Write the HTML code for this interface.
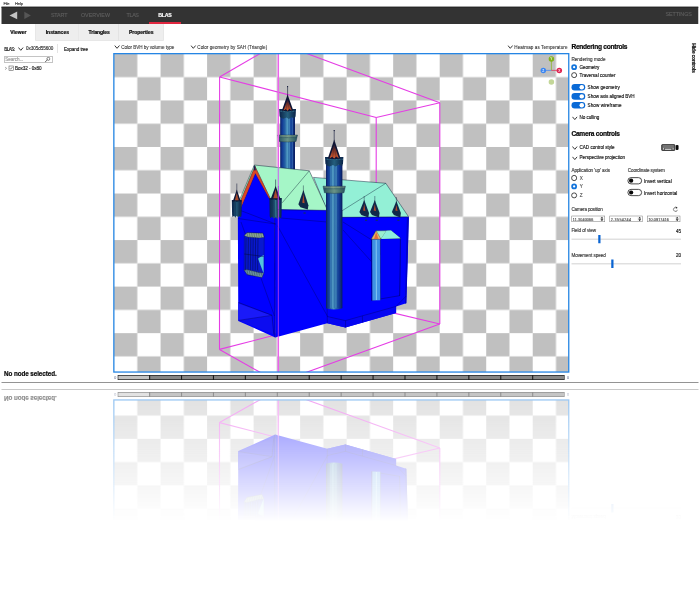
<!DOCTYPE html>
<html><head><meta charset="utf-8"><title>BLAS Viewer</title>
<style>
html,body{margin:0;padding:0;background:#fff;}
body{width:700px;height:600px;overflow:hidden;position:relative;font-family:"Liberation Sans",sans-serif;}
#outer{position:absolute;left:0;top:0;width:2800px;height:1532px;transform:scale(0.25);transform-origin:0 0;}
#app{position:absolute;left:0;top:0;width:700px;height:383px;background:#fff;overflow:hidden;zoom:4;
-webkit-box-reflect:below 6px linear-gradient(to bottom, rgba(255,255,255,0) 65.5%, rgba(255,255,255,0.5) 100%);}
.t{position:absolute;white-space:nowrap;line-height:1;display:block;-webkit-text-stroke:0.14px currentColor;}
.b{position:absolute;display:block;}
</style></head><body>
<div id="outer"><div id="app">
<span class="t" style="left:3.60px;top:1.34px;font-size:4.0px;letter-spacing:-0.186px;color:#333;">File</span>
<span class="t" style="left:15.00px;top:1.34px;font-size:4.0px;letter-spacing:-0.082px;color:#333;">Help</span>
<div class="b" style="left:1.40px;top:6.75px;width:696.90px;height:17.25px;background:#333;border-top:1px solid #262626;box-sizing:border-box;"></div>
<svg class="b" style="left:0;top:0" width="700" height="383" viewBox="0 0 700 383"><polygon points="9.5,15.4 17.2,11.5 17.2,19.3" fill="#c4c4c4"/><polygon points="30.9,15.4 24.3,11.7 24.3,19.1" fill="#565656"/></svg>
<span class="t" style="left:50.90px;top:12.18px;font-size:5.35px;letter-spacing:-0.109px;color:#5e5e5e;">START</span>
<span class="t" style="left:80.90px;top:12.18px;font-size:5.35px;letter-spacing:0.045px;color:#5e5e5e;">OVERVIEW</span>
<span class="t" style="left:126.60px;top:12.18px;font-size:5.35px;letter-spacing:-0.345px;color:#5e5e5e;">TLAS</span>
<span class="t" style="left:158.30px;top:12.10px;font-size:5.3px;letter-spacing:-0.332px;color:#fff;font-weight:bold;">BLAS</span>
<span class="t" style="left:665.40px;top:12.08px;font-size:5.35px;letter-spacing:-0.044px;color:#5e5e5e;">SETTINGS</span>
<div class="b" style="left:148.90px;top:21.90px;width:32.20px;height:2.00px;background:#e0263f;"></div>
<div class="b" style="left:35.40px;top:23.90px;width:43.80px;height:16.50px;background:#eee;border:0.6px solid #d8d8d8;box-sizing:border-box;border-top:none;"></div>
<div class="b" style="left:79.20px;top:23.90px;width:39.70px;height:16.50px;background:#eee;border:0.6px solid #d8d8d8;box-sizing:border-box;border-top:none;border-left:none;"></div>
<div class="b" style="left:118.90px;top:23.90px;width:44.60px;height:16.50px;background:#eee;border:0.6px solid #d8d8d8;box-sizing:border-box;border-top:none;border-left:none;"></div>
<span class="t" style="left:10.30px;top:29.95px;font-size:5.0px;letter-spacing:0.012px;color:#0a0a0a;font-weight:bold;-webkit-text-stroke:0.2px #0a0a0a;">Viewer</span>
<span class="t" style="left:45.70px;top:29.95px;font-size:5.0px;letter-spacing:0.026px;color:#0a0a0a;font-weight:bold;-webkit-text-stroke:0.2px #0a0a0a;">Instances</span>
<span class="t" style="left:88.60px;top:29.95px;font-size:5.0px;letter-spacing:-0.095px;color:#0a0a0a;font-weight:bold;-webkit-text-stroke:0.2px #0a0a0a;">Triangles</span>
<span class="t" style="left:128.90px;top:29.95px;font-size:5.0px;letter-spacing:-0.023px;color:#0a0a0a;font-weight:bold;-webkit-text-stroke:0.2px #0a0a0a;">Properties</span>
<span class="t" style="left:4.30px;top:46.65px;font-size:4.6px;letter-spacing:-0.588px;color:#111;">BLAS:</span>
<svg class="b" style="left:17.90px;top:46.90px" width="5.8" height="4" viewBox="0 0 5.8 4"><polyline points="0.4,0.5 2.8,3.3 5.2,0.5" fill="none" stroke="#151515" stroke-width="0.85"/></svg>
<span class="t" style="left:26.00px;top:46.35px;font-size:4.6px;letter-spacing:-0.044px;color:#333;">0x305d55600</span>
<div class="b" style="left:57.40px;top:43.90px;width:0.50px;height:9.20px;background:#c8c8c8;"></div>
<span class="t" style="left:63.90px;top:46.65px;font-size:4.6px;letter-spacing:-0.055px;color:#111;">Expand tree</span>
<div class="b" style="left:3.90px;top:56.40px;width:49.00px;height:6.30px;border:0.6px solid #8a8a8a;box-sizing:border-box;background:#fff;"></div>
<span class="t" style="left:5.30px;top:57.45px;font-size:4.6px;letter-spacing:-0.079px;color:#9a9a9a;">Search...</span>
<svg class="b" style="left:44.5px;top:56.8px" width="6" height="6" viewBox="0 0 6 6"><circle cx="3.9" cy="2.1" r="1.5" fill="none" stroke="#333" stroke-width="0.6"/><line x1="2.8" y1="3.2" x2="0.6" y2="5.2" stroke="#333" stroke-width="0.75"/></svg>
<svg class="b" style="left:4.6px;top:66.5px" width="3" height="4" viewBox="0 0 3 4"><polyline points="0.6,0.5 2.1,1.8 0.6,3.1" fill="none" stroke="#555" stroke-width="0.55"/></svg>
<div class="b" style="left:8.80px;top:65.70px;width:4.80px;height:4.80px;border:0.6px solid #444;box-sizing:border-box;background:#fff;"></div>
<svg class="b" style="left:8.8px;top:65.7px" width="4.8" height="4.8" viewBox="0 0 4.8 4.8"><polyline points="1.1,2.5 2.0,3.5 3.8,1.2" fill="none" stroke="#333" stroke-width="0.55"/></svg>
<span class="t" style="left:15.00px;top:66.05px;font-size:4.6px;letter-spacing:-0.059px;color:#111;">Box32 - 0x80</span>
<span class="t" style="left:4.00px;top:370.31px;font-size:6.3px;letter-spacing:-0.077px;color:#0a0a0a;font-weight:bold;-webkit-text-stroke:0.2px #0a0a0a;">No node selected.</span>
<div class="b" style="left:1.40px;top:381.95px;width:697.20px;height:0.95px;background:#949494;"></div>
<svg class="b" style="left:114.20px;top:45.10px" width="5.8" height="4" viewBox="0 0 5.8 4"><polyline points="0.4,0.5 2.8,3.3 5.2,0.5" fill="none" stroke="#151515" stroke-width="0.85"/></svg>
<span class="t" style="left:121.20px;top:44.75px;font-size:4.6px;letter-spacing:-0.039px;color:#333;-webkit-text-stroke:0.08px currentColor;">Color BVH by volume type</span>
<svg class="b" style="left:190.60px;top:45.10px" width="5.8" height="4" viewBox="0 0 5.8 4"><polyline points="0.4,0.5 2.8,3.3 5.2,0.5" fill="none" stroke="#151515" stroke-width="0.85"/></svg>
<span class="t" style="left:197.30px;top:44.75px;font-size:4.6px;letter-spacing:0.028px;color:#333;-webkit-text-stroke:0.08px currentColor;">Color geometry by SAH (Triangle)</span>
<svg class="b" style="left:507.50px;top:45.10px" width="5.8" height="4" viewBox="0 0 5.8 4"><polyline points="0.4,0.5 2.8,3.3 5.2,0.5" fill="none" stroke="#151515" stroke-width="0.85"/></svg>
<span class="t" style="left:514.30px;top:44.75px;font-size:4.6px;letter-spacing:0.067px;color:#333;-webkit-text-stroke:0.08px currentColor;">Heatmap as Temperature</span>
<svg class="b" style="left:0;top:0" width="700" height="383" viewBox="0 0 700 383">
<defs>
<pattern id="chk" x="114.05" y="53.9" width="46.52" height="46.54" patternUnits="userSpaceOnUse">
<rect x="0" y="0" width="46.52" height="46.54" fill="#fff"/>
<rect x="0" y="0" width="23.26" height="23.27" fill="#c0c0c0"/>
<rect x="23.26" y="23.27" width="23.26" height="23.27" fill="#c0c0c0"/>
</pattern>
<clipPath id="vpc"><rect x="113.9" y="53.7" width="454.9" height="318.3"/></clipPath>
<linearGradient id="shaft" x1="0" x2="1" y1="0" y2="0">
<stop offset="0" stop-color="#0a1e5c"/><stop offset="0.12" stop-color="#123a94"/>
<stop offset="0.3" stop-color="#2866a6"/><stop offset="0.45" stop-color="#4e98be"/>
<stop offset="0.6" stop-color="#2c6ca8"/><stop offset="0.8" stop-color="#143c98"/>
<stop offset="1" stop-color="#081a5a"/></linearGradient>
<linearGradient id="crown" x1="0" x2="1" y1="0" y2="0">
<stop offset="0" stop-color="#0a2248"/><stop offset="0.5" stop-color="#245e7c"/><stop offset="1" stop-color="#0a2248"/></linearGradient>
<linearGradient id="ring" x1="0" x2="1" y1="0" y2="0">
<stop offset="0" stop-color="#24505e"/><stop offset="0.5" stop-color="#6a9486"/><stop offset="1" stop-color="#24505e"/></linearGradient>
<linearGradient id="cone" x1="0" x2="1" y1="0" y2="0">
<stop offset="0" stop-color="#0a1030"/><stop offset="0.36" stop-color="#1c1c3c"/><stop offset="0.5" stop-color="#d8582a"/>
<stop offset="0.64" stop-color="#1c1c3c"/><stop offset="1" stop-color="#0a1030"/></linearGradient>
<linearGradient id="flame" x1="0" x2="0" y1="0" y2="1"><stop offset="0" stop-color="#1a1a3a"/><stop offset="0.4" stop-color="#7a3428"/><stop offset="1" stop-color="#d85c2e"/></linearGradient>
<linearGradient id="win" x1="0" x2="1" y1="0" y2="0">
<stop offset="0" stop-color="#0a1a70"/><stop offset="0.5" stop-color="#1a3aa0"/><stop offset="1" stop-color="#0a1a70"/></linearGradient>
</defs>
<rect x="113.85" y="53.65" width="454.9" height="318.4" fill="url(#chk)"/>
<g clip-path="url(#vpc)">
<line x1="219.6" y1="77.0" x2="278.3" y2="43.0" stroke="#e53de5" stroke-width="1.1" stroke-opacity="1"/>
<line x1="278.3" y1="43.0" x2="439.8" y2="102.7" stroke="#e53de5" stroke-width="1.1" stroke-opacity="1"/>
<line x1="439.8" y1="102.7" x2="376.2" y2="117.5" stroke="#e53de5" stroke-width="1.1" stroke-opacity="1"/>
<line x1="376.2" y1="117.5" x2="219.6" y2="77.0" stroke="#e53de5" stroke-width="1.1" stroke-opacity="1"/>
<line x1="219.6" y1="77.0" x2="219.5" y2="349.4" stroke="#e53de5" stroke-width="1.1" stroke-opacity="1"/>
<line x1="439.8" y1="102.7" x2="439.8" y2="324.0" stroke="#e53de5" stroke-width="1.1" stroke-opacity="1"/>
<line x1="376.2" y1="117.5" x2="376.2" y2="308.9" stroke="#e53de5" stroke-width="1.1" stroke-opacity="1"/>
<line x1="219.5" y1="349.4" x2="376.2" y2="308.9" stroke="#e53de5" stroke-width="1.1" stroke-opacity="1"/>
<line x1="376.2" y1="308.9" x2="439.8" y2="324.0" stroke="#e53de5" stroke-width="1.1" stroke-opacity="1"/>
<line x1="219.5" y1="349.4" x2="278.3" y2="382.5" stroke="#e53de5" stroke-width="1.1" stroke-opacity="1"/>
<line x1="278.3" y1="382.5" x2="439.8" y2="324.0" stroke="#e53de5" stroke-width="1.1" stroke-opacity="1"/>
<path d="M280.20000000000005,116.7 L280.20000000000005,175.0 L295.0,175.0 L295.0,116.7 Z" fill="url(#shaft)"/>
<line x1="282.80" y1="117.2" x2="283.02" y2="173.5" stroke="#0a2a90" stroke-width="0.5" stroke-opacity="0.6"/>
<line x1="284.30" y1="117.2" x2="284.32" y2="173.5" stroke="#103c9c" stroke-width="0.5" stroke-opacity="0.6"/>
<line x1="285.88" y1="117.2" x2="285.75" y2="173.5" stroke="#103c9c" stroke-width="0.5" stroke-opacity="0.6"/>
<line x1="287.42" y1="117.2" x2="287.52" y2="173.5" stroke="#6ab8e0" stroke-width="0.5" stroke-opacity="0.6"/>
<line x1="289.38" y1="117.2" x2="289.49" y2="173.5" stroke="#7cc4e8" stroke-width="0.5" stroke-opacity="0.6"/>
<line x1="290.58" y1="117.2" x2="290.54" y2="173.5" stroke="#103c9c" stroke-width="0.5" stroke-opacity="0.6"/>
<line x1="292.44" y1="117.2" x2="292.46" y2="173.5" stroke="#6ab8e0" stroke-width="0.5" stroke-opacity="0.6"/>
<path d="M277.70000000000005,135.0 L297.5,135.0 L296.1,141.4 Q287.6,142.6 279.1,141.4 Z" fill="url(#ring)" stroke="#14304a" stroke-width="0.4"/>
<line x1="278.50000000000006" y1="135.9" x2="296.7" y2="135.9" stroke="#d6d69a" stroke-width="0.7" stroke-dasharray="0.6 0.6"/>
<line x1="279.1" y1="137.6" x2="296.1" y2="137.6" stroke="#2a4a5a" stroke-width="0.9" stroke-dasharray="0.5 0.7"/>
<path d="M279.20000000000005,109.0 L296.0,109.0 L295.6,116.2 L294.6,118.4 L291.8,117.2 L288.8,119.0 L286.40000000000003,117.4 L283.40000000000003,118.8 L280.6,117.60000000000001 L279.6,116.2 Z" fill="url(#crown)"/>
<line x1="279.80000000000007" y1="111.4" x2="295.4" y2="111.4" stroke="#3a7a94" stroke-width="1.2" stroke-dasharray="0.7 0.8" stroke-opacity="0.8"/>
<polygon points="287.6,94.5 293.3,110.6 287.6,111.4 281.90000000000003,110.6" fill="#0e1434"/>
<polygon points="287.6,99.5 291.704,110.4 289.31,108.8 287.6,110.8 285.89000000000004,109.0 283.49600000000004,110.4" fill="url(#flame)"/>
<line x1="286.232" y1="109.5" x2="287.3" y2="101.5" stroke="#3a1c2c" stroke-width="0.35" stroke-opacity="1"/>
<line x1="289.196" y1="109.5" x2="287.90000000000003" y2="101.5" stroke="#3a1c2c" stroke-width="0.35" stroke-opacity="1"/>
<circle cx="287.6" cy="86.6" r="0.55" fill="#0a1030"/>
<line x1="287.6" y1="86.0" x2="287.6" y2="96.5" stroke="#0a1030" stroke-width="0.6" stroke-opacity="1"/>
<polygon points="237.8,205.5 240.7,207.6 255.3,172.5 270.0,199.0 274.8,205.0 275.2,337.4 238.3,320.9" fill="#0000ff"/>
<polygon points="238.5,302.5 272.0,315.3 273.8,334.6 238.6,320.4" fill="#0c0cf0"/>
<polygon points="238.5,303.5 272.0,315.6 238.6,320.4" fill="#1a1af8"/>
<polygon points="274.8,203.0 281.0,209.0 327.4,210.0 342.0,217.0 408.7,217.0 407.6,260.0 406.2,303.3 396.1,306.4 396.1,313.0 345.4,327.6 327.3,323.2 275.2,337.4" fill="#0000ff"/>
<polygon points="327.3,316.5 345.4,320.6 396.1,306.4 396.1,313.0 345.4,327.6 327.3,323.2" fill="#0505f2"/>
<polygon points="406.9,217.2 408.9,217.2 406.4,303.3 405.0,303.6" fill="#0000c8"/>
<line x1="274.6" y1="205" x2="275.0" y2="337.2" stroke="#000066" stroke-width="0.6" stroke-opacity="1"/>
<line x1="277.5" y1="225.7" x2="327.7" y2="316.7" stroke="#000066" stroke-width="0.4" stroke-opacity="1"/>
<line x1="238.0" y1="218.5" x2="275.6" y2="224.0" stroke="#000066" stroke-width="0.4" stroke-opacity="1"/>
<line x1="238.0" y1="209.5" x2="275.6" y2="224.0" stroke="#000066" stroke-width="0.4" stroke-opacity="1"/>
<line x1="241.0" y1="222" x2="274.5" y2="316" stroke="#000066" stroke-width="0.4" stroke-opacity="1"/>
<line x1="238.5" y1="302.5" x2="272.0" y2="315.3" stroke="#000066" stroke-width="0.55" stroke-opacity="1"/>
<line x1="238.6" y1="320.4" x2="272.0" y2="315.3" stroke="#000066" stroke-width="0.4" stroke-opacity="1"/>
<line x1="272.0" y1="315.3" x2="273.8" y2="334.6" stroke="#000066" stroke-width="0.45" stroke-opacity="1"/>
<line x1="281" y1="218" x2="327" y2="222" stroke="#000066" stroke-width="0.4" stroke-opacity="1"/>
<line x1="343" y1="230" x2="371.8" y2="262" stroke="#000066" stroke-width="0.4" stroke-opacity="1"/>
<line x1="343" y1="222" x2="371.8" y2="240" stroke="#000066" stroke-width="0.4" stroke-opacity="1"/>
<line x1="327.3" y1="323.2" x2="327.0" y2="300" stroke="#000066" stroke-width="0.4" stroke-opacity="1"/>
<line x1="345.4" y1="327.6" x2="345.6" y2="320.6" stroke="#000066" stroke-width="0.4" stroke-opacity="1"/>
<line x1="327.3" y1="316.5" x2="345.4" y2="320.6" stroke="#000066" stroke-width="0.4" stroke-opacity="1"/>
<line x1="345.4" y1="320.6" x2="396.1" y2="306.4" stroke="#000066" stroke-width="0.4" stroke-opacity="1"/>
<line x1="362.4" y1="315.8" x2="362.6" y2="322.6" stroke="#000066" stroke-width="0.4" stroke-opacity="1"/>
<line x1="396.1" y1="306.4" x2="406.2" y2="296.0" stroke="#000066" stroke-width="0.4" stroke-opacity="1"/>
<line x1="400.2" y1="240" x2="399.6" y2="296" stroke="#000066" stroke-width="0.5" stroke-opacity="1"/>
<line x1="381" y1="241" x2="399.6" y2="296" stroke="#000066" stroke-width="0.5" stroke-opacity="1"/>
<polygon points="244.3,235.5 247.0,232.7 262.8,233.2 264.2,237.2 264.0,272.0 262.0,277.0 247.0,274.5 244.1,270.0" fill="#0818d0" stroke="#06103a" stroke-width="0.3" stroke-linejoin="round"/>
<polygon points="244.3,235.5 247.0,232.7 262.8,233.2 264.2,237.2 259.0,238.0 247.5,237.0" fill="#8aa694" stroke="#102030" stroke-width="0.3" stroke-linejoin="round"/>
<polygon points="244.1,270.0 247.0,274.5 262.0,277.5 263.8,273.0 258.5,272.5 247.0,269.5" fill="#6a90a0" stroke="#102030" stroke-width="0.3" stroke-linejoin="round"/>
<polygon points="258.0,258.5 263.6,255.0 263.6,273.5" fill="#52c4de"/>
<line x1="246.0" y1="237.5" x2="245.6" y2="270.5" stroke="#040a30" stroke-width="0.45" stroke-opacity="1"/>
<line x1="248.4" y1="237.5" x2="248.0" y2="270.5" stroke="#040a30" stroke-width="0.45" stroke-opacity="1"/>
<line x1="250.8" y1="237.5" x2="250.4" y2="270.5" stroke="#040a30" stroke-width="0.45" stroke-opacity="1"/>
<line x1="253.2" y1="237.5" x2="252.79999999999998" y2="270.5" stroke="#040a30" stroke-width="0.45" stroke-opacity="1"/>
<line x1="255.6" y1="237.5" x2="255.2" y2="270.5" stroke="#040a30" stroke-width="0.45" stroke-opacity="1"/>
<line x1="258.0" y1="237.5" x2="257.6" y2="270.5" stroke="#040a30" stroke-width="0.45" stroke-opacity="1"/>
<line x1="244.3" y1="254.0" x2="263.6" y2="256.5" stroke="#040a40" stroke-width="0.5" stroke-opacity="1"/>
<line x1="247.0" y1="233.0" x2="247.8" y2="237.4" stroke="#2a3a30" stroke-width="0.35" stroke-opacity="1"/>
<line x1="247.0" y1="270.4" x2="248.0" y2="275.6" stroke="#1a2a38" stroke-width="0.35" stroke-opacity="1"/>
<line x1="249.3" y1="233.0" x2="250.10000000000002" y2="237.4" stroke="#2a3a30" stroke-width="0.35" stroke-opacity="1"/>
<line x1="249.3" y1="270.4" x2="250.3" y2="275.6" stroke="#1a2a38" stroke-width="0.35" stroke-opacity="1"/>
<line x1="251.6" y1="233.0" x2="252.4" y2="237.4" stroke="#2a3a30" stroke-width="0.35" stroke-opacity="1"/>
<line x1="251.6" y1="270.4" x2="252.6" y2="275.6" stroke="#1a2a38" stroke-width="0.35" stroke-opacity="1"/>
<line x1="253.9" y1="233.0" x2="254.70000000000002" y2="237.4" stroke="#2a3a30" stroke-width="0.35" stroke-opacity="1"/>
<line x1="253.9" y1="270.4" x2="254.9" y2="275.6" stroke="#1a2a38" stroke-width="0.35" stroke-opacity="1"/>
<line x1="256.2" y1="233.0" x2="257.0" y2="237.4" stroke="#2a3a30" stroke-width="0.35" stroke-opacity="1"/>
<line x1="256.2" y1="270.4" x2="257.2" y2="275.6" stroke="#1a2a38" stroke-width="0.35" stroke-opacity="1"/>
<line x1="258.5" y1="233.0" x2="259.3" y2="237.4" stroke="#2a3a30" stroke-width="0.35" stroke-opacity="1"/>
<line x1="258.5" y1="270.4" x2="259.5" y2="275.6" stroke="#1a2a38" stroke-width="0.35" stroke-opacity="1"/>
<line x1="260.8" y1="233.0" x2="261.6" y2="237.4" stroke="#2a3a30" stroke-width="0.35" stroke-opacity="1"/>
<line x1="260.8" y1="270.4" x2="261.8" y2="275.6" stroke="#1a2a38" stroke-width="0.35" stroke-opacity="1"/>
<polygon points="371.4,239.0 400.4,238.2 399.6,295.7 371.6,300.4" fill="#0000fa" stroke="#00005a" stroke-width="0.45" stroke-linejoin="round"/>
<polygon points="372.0,239.3 380.3,239.3 380.5,300.3 372.2,300.6" fill="#3f92e4"/>
<line x1="376.2" y1="240" x2="376.4" y2="300" stroke="#86c8f4" stroke-width="1.0" stroke-opacity="1"/>
<line x1="380.4" y1="239.3" x2="380.6" y2="300.3" stroke="#00005a" stroke-width="0.4" stroke-opacity="1"/>
<line x1="371.8" y1="239.3" x2="372.0" y2="300.6" stroke="#00005a" stroke-width="0.4" stroke-opacity="1"/>
<polygon points="371.4,238.8 376.0,230.8 391.0,230.6 400.5,238.2" fill="#9af0cf" stroke="#102030" stroke-width="0.4" stroke-linejoin="round"/>
<polygon points="371.4,239.2 376.2,230.8 381.0,239.2" fill="#e8b46a" stroke="#102030" stroke-width="0.3" stroke-linejoin="round"/>
<polygon points="374.0,239.0 376.2,232.0 378.4,239.0" fill="#e0703a"/>
<line x1="381.0" y1="239.2" x2="386.5" y2="230.8" stroke="#102030" stroke-width="0.35" stroke-opacity="1"/>
<polygon points="381.0,239.0 386.5,230.8 391.0,230.6 400.5,238.2" fill="#8eeedd"/>
<polygon points="313.5,177.4 385.8,183.3 408.6,216.8 342.0,217.3 326.0,208.0" fill="#93f0d6" stroke="#06122e" stroke-width="0.45" stroke-linejoin="round"/>
<line x1="385.8" y1="183.3" x2="342.0" y2="210.8" stroke="#06122e" stroke-width="0.4" stroke-opacity="1"/>
<line x1="342.0" y1="210.8" x2="342.0" y2="217.3" stroke="#06122e" stroke-width="0.25" stroke-opacity="1"/>
<polygon points="254.3,165.0 309.3,170.8 327.6,210.4 281.0,209.6 270.2,198.6" fill="#a5f6c7" stroke="#06122e" stroke-width="0.45" stroke-linejoin="round"/>
<line x1="309.3" y1="170.8" x2="282.2" y2="202.8" stroke="#06122e" stroke-width="0.4" stroke-opacity="1"/>
<polygon points="254.3,165.0 236.1,207.9 237.8,207.9 255.0,166.5" fill="#a2f2c4" stroke="#101030" stroke-width="0.4" stroke-linejoin="round"/>
<polygon points="255.0,166.5 237.6,207.9 240.9,207.9 255.3,173.6 269.3,198.8 270.3,198.6" fill="#dc4624" stroke="#301020" stroke-width="0.3" stroke-linejoin="round"/>
<polygon points="253.6,166.2 255.0,166.0 255.9,170.2 254.2,170.6" fill="#1a1a50"/>
<line x1="281" y1="209.9" x2="327.6" y2="210.7" stroke="#0000c0" stroke-width="0.5" stroke-opacity="1"/>
<line x1="342" y1="217.6" x2="408.6" y2="217.2" stroke="#0000c0" stroke-width="0.5" stroke-opacity="1"/>
<polygon points="231.8,200.0 241.8,200.0 241.5,215.0 241.0,217.43 239.6,216.03 238.2,217.47 236.8,215.69 235.4,217.65 234.0,215.67 232.6,217.22 232.10000000000002,215.0" fill="url(#crown)"/>
<line x1="234.00" y1="202.0" x2="233.50" y2="216.2" stroke="#0a2040" stroke-width="0.5" stroke-opacity="0.7"/>
<line x1="235.40" y1="202.0" x2="235.70" y2="216.2" stroke="#0a2040" stroke-width="0.5" stroke-opacity="0.7"/>
<line x1="236.80" y1="202.0" x2="237.13" y2="216.2" stroke="#123050" stroke-width="0.5" stroke-opacity="0.7"/>
<line x1="238.20" y1="202.0" x2="238.43" y2="216.2" stroke="#0a2040" stroke-width="0.5" stroke-opacity="0.7"/>
<line x1="239.60" y1="202.0" x2="239.52" y2="216.2" stroke="#0a2040" stroke-width="0.5" stroke-opacity="0.7"/>
<line x1="232.10000000000002" y1="201.1" x2="241.5" y2="201.1" stroke="#0a1c38" stroke-width="1.6" stroke-dasharray="0.8 0.5"/>
<polygon points="236.8,189.5 240.7,201.0 232.90000000000003,201.0" fill="#0e1838"/>
<polygon points="236.8,193.0 238.68,200.3 234.92000000000002,200.3" fill="#a84a2c"/>
<line x1="236.8" y1="183.5" x2="236.8" y2="191.5" stroke="#0a1030" stroke-width="0.5" stroke-opacity="1"/>
<polygon points="269.40000000000003,198.0 281.8,198.0 281.5,216.0 281.0,218.39 279.2,216.9 277.4,218.98 275.6,217.13 273.8,218.54 272.0,216.77 270.2,218.33 269.70000000000005,216.0" fill="url(#crown)"/>
<line x1="272.13" y1="200.0" x2="272.14" y2="217.2" stroke="#0a2040" stroke-width="0.5" stroke-opacity="0.7"/>
<line x1="273.86" y1="200.0" x2="274.02" y2="217.2" stroke="#123050" stroke-width="0.5" stroke-opacity="0.7"/>
<line x1="275.60" y1="200.0" x2="276.00" y2="217.2" stroke="#5aaab0" stroke-width="0.5" stroke-opacity="0.7"/>
<line x1="277.34" y1="200.0" x2="277.35" y2="217.2" stroke="#0a2040" stroke-width="0.5" stroke-opacity="0.7"/>
<line x1="279.07" y1="200.0" x2="278.75" y2="217.2" stroke="#4a9aa6" stroke-width="0.5" stroke-opacity="0.7"/>
<line x1="269.70000000000005" y1="199.1" x2="281.5" y2="199.1" stroke="#0a1c38" stroke-width="1.6" stroke-dasharray="0.8 0.5"/>
<polygon points="275.6,186.0 280.5,199.0 270.70000000000005,199.0" fill="#0e1838"/>
<polygon points="275.6,189.5 277.88,198.3 273.32000000000005,198.3" fill="#a84a2c"/>
<line x1="275.6" y1="179.5" x2="275.6" y2="188.0" stroke="#0a1030" stroke-width="0.5" stroke-opacity="1"/>
<polygon points="303.4,190.0 308.4,205.3 307.79999999999995,209.60000000000002 300.4,207.20000000000002 298.4,204.3" fill="#10284a"/>
<polygon points="303.4,194.0 304.59999999999997,203.3 302.29999999999995,202.8" fill="#b04a2a"/>
<line x1="303.4" y1="185.4" x2="303.4" y2="192.0" stroke="#0a1030" stroke-width="0.4" stroke-opacity="1"/>
<polygon points="364.2,200.0 369.0,213.1 368.4,217.4 361.4,215.0 359.4,212.1" fill="#10284a"/>
<polygon points="364.2,204.0 365.4,211.1 363.09999999999997,210.6" fill="#b04a2a"/>
<line x1="364.2" y1="196.0" x2="364.2" y2="202.0" stroke="#0a1030" stroke-width="0.4" stroke-opacity="1"/>
<polygon points="374.8,200.0 379.6,213.1 379.0,217.4 372.0,215.0 370.0,212.1" fill="#10284a"/>
<polygon points="374.8,204.0 376.0,211.1 373.7,210.6" fill="#b04a2a"/>
<line x1="374.8" y1="196.0" x2="374.8" y2="202.0" stroke="#0a1030" stroke-width="0.4" stroke-opacity="1"/>
<polygon points="396.4,201.0 400.9,213.1 400.29999999999995,217.4 393.9,215.0 391.9,212.1" fill="#10284a"/>
<polygon points="396.4,205.0 397.59999999999997,211.1 395.29999999999995,210.6" fill="#b04a2a"/>
<line x1="396.4" y1="197.0" x2="396.4" y2="203.0" stroke="#0a1030" stroke-width="0.4" stroke-opacity="1"/>
<rect x="303.5" y="212.4" width="2.2" height="1.3" fill="#102a70"/>
<rect x="365.0" y="219.6" width="2.2" height="1.3" fill="#102a70"/>
<rect x="375.6" y="219.6" width="2.2" height="1.3" fill="#102a70"/>
<rect x="397.3" y="219.6" width="2.2" height="1.3" fill="#102a70"/>
<path d="M326.0,164.8 L326.0,308.2 Q334.2,311.0 342.4,308.2 L342.4,164.8 Z" fill="url(#shaft)"/>
<line x1="328.94" y1="164.8" x2="328.92" y2="307.9" stroke="#0a2a90" stroke-width="0.5" stroke-opacity="0.6"/>
<line x1="330.78" y1="164.8" x2="330.73" y2="307.9" stroke="#6ab8e0" stroke-width="0.5" stroke-opacity="0.6"/>
<line x1="332.71" y1="164.8" x2="332.70" y2="307.9" stroke="#7cc4e8" stroke-width="0.5" stroke-opacity="0.6"/>
<line x1="334.30" y1="164.8" x2="334.10" y2="307.9" stroke="#0c3296" stroke-width="0.5" stroke-opacity="0.6"/>
<line x1="336.25" y1="164.8" x2="336.01" y2="307.9" stroke="#7cc4e8" stroke-width="0.5" stroke-opacity="0.6"/>
<line x1="337.81" y1="164.8" x2="337.72" y2="307.9" stroke="#0c3296" stroke-width="0.5" stroke-opacity="0.6"/>
<line x1="339.46" y1="164.8" x2="339.18" y2="307.9" stroke="#0a2a90" stroke-width="0.5" stroke-opacity="0.6"/>
<path d="M323.0,186.2 L345.4,186.2 L344.0,192.8 Q334.2,194.0 324.4,192.8 Z" fill="url(#ring)" stroke="#14304a" stroke-width="0.4"/>
<line x1="323.8" y1="187.1" x2="344.59999999999997" y2="187.1" stroke="#d6d69a" stroke-width="0.7" stroke-dasharray="0.6 0.6"/>
<line x1="324.4" y1="188.79999999999998" x2="344.0" y2="188.79999999999998" stroke="#2a4a5a" stroke-width="0.9" stroke-dasharray="0.5 0.7"/>
<path d="M325.0,156.9 L343.4,156.9 L343.0,163.8 L342.0,166.0 L338.8,164.8 L335.4,166.60000000000002 L333.0,165.0 L329.59999999999997,166.4 L326.4,165.20000000000002 L325.4,163.8 Z" fill="url(#crown)"/>
<line x1="325.6" y1="159.3" x2="342.79999999999995" y2="159.3" stroke="#3a7a94" stroke-width="1.2" stroke-dasharray="0.7 0.8" stroke-opacity="0.8"/>
<polygon points="334.2,139.5 340.59999999999997,158.4 334.2,159.20000000000002 327.8,158.4" fill="#0e1434"/>
<polygon points="334.2,144.5 338.808,158.20000000000002 336.12,156.60000000000002 334.2,158.60000000000002 332.28,156.8 329.592,158.20000000000002" fill="url(#flame)"/>
<line x1="332.664" y1="157.3" x2="333.9" y2="146.5" stroke="#3a1c2c" stroke-width="0.35" stroke-opacity="1"/>
<line x1="335.99199999999996" y1="157.3" x2="334.5" y2="146.5" stroke="#3a1c2c" stroke-width="0.35" stroke-opacity="1"/>
<circle cx="334.2" cy="130.6" r="0.55" fill="#0a1030"/>
<line x1="334.2" y1="130.0" x2="334.2" y2="141.5" stroke="#0a1030" stroke-width="0.6" stroke-opacity="1"/>
<line x1="278.3" y1="42.8" x2="278.3" y2="167.6" stroke="#ec62ec" stroke-width="1.5" stroke-opacity="1"/>
<line x1="278.3" y1="167.6" x2="278.3" y2="186.0" stroke="#c877ec" stroke-width="1.2" stroke-opacity="1"/>
<line x1="278.3" y1="186.0" x2="278.3" y2="209.6" stroke="#b436e6" stroke-width="1.1" stroke-opacity="0.95"/>
<line x1="278.3" y1="209.6" x2="278.3" y2="337.0" stroke="#b83cec" stroke-width="1.0" stroke-opacity="0.9"/>
<line x1="278.3" y1="336.6" x2="278.3" y2="382.3" stroke="#ec62ec" stroke-width="1.5" stroke-opacity="1"/>
<rect x="277.6" y="165" width="1.4" height="173" fill="#4a3cf0" opacity="0.0"/>
<line x1="551.4" y1="70.4" x2="551.4" y2="58.9" stroke="#8ab51a" stroke-width="0.7" stroke-opacity="1"/>
<line x1="551.4" y1="70.4" x2="543.3" y2="70.4" stroke="#3b82f6" stroke-width="0.7" stroke-opacity="1"/>
<line x1="551.4" y1="70.4" x2="559.3" y2="70.4" stroke="#e0254e" stroke-width="0.7" stroke-opacity="1"/>
<circle cx="551.4" cy="58.9" r="2.75" fill="#82b21c" opacity="1"/>
<text x="551.4" y="60.05" font-family="Liberation Sans, sans-serif" font-size="3.2" font-weight="bold" text-anchor="middle" fill="#fff" fill-opacity="0.85">Y</text>
<circle cx="543.3" cy="70.4" r="2.75" fill="#3b86f2" opacity="1"/>
<text x="543.3" y="71.55000000000001" font-family="Liberation Sans, sans-serif" font-size="3.2" font-weight="bold" text-anchor="middle" fill="#fff" fill-opacity="0.85">Z</text>
<circle cx="559.3" cy="70.4" r="2.75" fill="#de2350" opacity="1"/>
<text x="559.3" y="71.55000000000001" font-family="Liberation Sans, sans-serif" font-size="3.2" font-weight="bold" text-anchor="middle" fill="#fff" fill-opacity="0.85">X</text>
<circle cx="551.4" cy="82.0" r="2.75" fill="#b9cf86" opacity="0.85"/>
</g>
<rect x="113.85" y="53.65" width="454.9" height="318.4" fill="none" stroke="#2585e4" stroke-width="1.3"/>
</svg>
<span class="t" style="left:114.20px;top:375.84px;font-size:3.6px;letter-spacing:0.000px;color:#7a80a0;-webkit-text-stroke:0.08px currentColor;">0</span>
<span class="t" style="left:566.90px;top:375.84px;font-size:3.6px;letter-spacing:0.000px;color:#7a80a0;-webkit-text-stroke:0.08px currentColor;">0</span>
<svg class="b" style="left:0;top:0" width="700" height="383" viewBox="0 0 700 383"><rect x="117.7" y="375.0" width="446.90000000000003" height="5.0" fill="#1c1c1c"/><rect x="118.30" y="375.70" width="30.77" height="3.60" fill="#c2c2c2"/><rect x="150.17" y="375.70" width="30.82" height="3.60" fill="#868686"/><rect x="182.09" y="375.70" width="30.82" height="3.60" fill="#868686"/><rect x="214.01" y="375.70" width="30.82" height="3.60" fill="#868686"/><rect x="245.94" y="375.70" width="30.82" height="3.60" fill="#868686"/><rect x="277.86" y="375.70" width="30.82" height="3.60" fill="#868686"/><rect x="309.78" y="375.70" width="30.82" height="3.60" fill="#868686"/><rect x="341.70" y="375.70" width="30.82" height="3.60" fill="#868686"/><rect x="373.62" y="375.70" width="30.82" height="3.60" fill="#868686"/><rect x="405.54" y="375.70" width="30.82" height="3.60" fill="#868686"/><rect x="437.46" y="375.70" width="30.82" height="3.60" fill="#868686"/><rect x="469.39" y="375.70" width="30.82" height="3.60" fill="#868686"/><rect x="501.31" y="375.70" width="30.82" height="3.60" fill="#868686"/><rect x="533.23" y="375.70" width="30.77" height="3.60" fill="#868686"/></svg>
<span class="t" style="left:571.40px;top:43.87px;font-size:6.6px;letter-spacing:-0.261px;color:#0a0a0a;font-weight:bold;-webkit-text-stroke:0.22px #0a0a0a;">Rendering controls</span>
<span class="t" style="left:571.40px;top:56.90px;font-size:4.6px;letter-spacing:0.006px;color:#3a3a3a;">Rendering mode</span>
<div class="b" style="left:571.20px;top:64.15px;width:5.8px;height:5.8px;border-radius:50%;box-sizing:border-box;border:1.75px solid #1274dc;background:#fff;"></div>
<span class="t" style="left:579.50px;top:64.65px;font-size:4.6px;letter-spacing:-0.062px;color:#111;">Geometry</span>
<div class="b" style="left:571.20px;top:72.25px;width:5.8px;height:5.8px;border-radius:50%;box-sizing:border-box;border:0.95px solid #111;background:#fff;"></div>
<span class="t" style="left:579.50px;top:72.75px;font-size:4.6px;letter-spacing:0.022px;color:#111;">Traversal counter</span>
<div class="b" style="left:571.40px;top:84.00px;width:13.8px;height:6.6px;border-radius:3.3px;background:#0a6ad6;"></div>
<div class="b" style="left:579.60px;top:85.10px;width:4.40px;height:4.40px;border-radius:50%;background:#fff;"></div>
<span class="t" style="left:587.60px;top:85.05px;font-size:4.6px;letter-spacing:0.026px;color:#111;">Show geometry</span>
<div class="b" style="left:571.40px;top:93.10px;width:13.8px;height:6.6px;border-radius:3.3px;background:#0a6ad6;"></div>
<div class="b" style="left:579.60px;top:94.20px;width:4.40px;height:4.40px;border-radius:50%;background:#fff;"></div>
<span class="t" style="left:587.60px;top:94.15px;font-size:4.6px;letter-spacing:-0.039px;color:#111;">Show axis aligned BVH</span>
<div class="b" style="left:571.40px;top:101.90px;width:13.8px;height:6.6px;border-radius:3.3px;background:#0a6ad6;"></div>
<div class="b" style="left:579.60px;top:103.00px;width:4.40px;height:4.40px;border-radius:50%;background:#fff;"></div>
<span class="t" style="left:587.60px;top:103.45px;font-size:4.6px;letter-spacing:0.073px;color:#111;">Show wireframe</span>
<svg class="b" style="left:572.00px;top:116.30px" width="5.8" height="4" viewBox="0 0 5.8 4"><polyline points="0.4,0.5 2.8,3.3 5.2,0.5" fill="none" stroke="#151515" stroke-width="0.85"/></svg>
<span class="t" style="left:579.50px;top:115.45px;font-size:4.6px;letter-spacing:-0.040px;color:#111;">No culling</span>
<span class="t" style="left:571.40px;top:130.87px;font-size:6.6px;letter-spacing:-0.246px;color:#0a0a0a;font-weight:bold;-webkit-text-stroke:0.22px #0a0a0a;">Camera controls</span>
<svg class="b" style="left:572.00px;top:146.10px" width="5.8" height="4" viewBox="0 0 5.8 4"><polyline points="0.4,0.5 2.8,3.3 5.2,0.5" fill="none" stroke="#151515" stroke-width="0.85"/></svg>
<span class="t" style="left:579.50px;top:145.55px;font-size:4.6px;letter-spacing:-0.026px;color:#111;">CAD control style</span>
<svg class="b" style="left:660.8px;top:144.0px" width="19" height="7" viewBox="0 0 19 7"><rect x="0.9" y="0.6" width="13.2" height="5.9" rx="0.7" fill="#5c5c5c" stroke="#161616" stroke-width="0.7"/><rect x="2.0" y="1.6" width="11.0" height="0.7" fill="#a0a0a0"/><rect x="2.0" y="2.9" width="11.0" height="0.6" fill="#8e8e8e"/><rect x="2.2" y="3.9" width="0.9" height="1.7" fill="#d8d8d8"/><rect x="11.9" y="3.9" width="0.9" height="1.7" fill="#d8d8d8"/><rect x="4.3" y="4.8" width="6.2" height="0.9" fill="#f0f0f0"/><rect x="14.9" y="0.9" width="2.9" height="5.1" rx="1.2" fill="#0a0a0a"/></svg>
<svg class="b" style="left:572.00px;top:156.30px" width="5.8" height="4" viewBox="0 0 5.8 4"><polyline points="0.4,0.5 2.8,3.3 5.2,0.5" fill="none" stroke="#151515" stroke-width="0.85"/></svg>
<span class="t" style="left:579.50px;top:155.45px;font-size:4.6px;letter-spacing:0.020px;color:#111;">Perspective projection</span>
<span class="t" style="left:571.40px;top:168.15px;font-size:4.6px;letter-spacing:-0.072px;color:#3a3a3a;">Application &#x27;up&#x27; axis</span>
<span class="t" style="left:627.70px;top:168.15px;font-size:4.6px;letter-spacing:-0.079px;color:#3a3a3a;">Coordinate system</span>
<div class="b" style="left:571.20px;top:175.10px;width:5.8px;height:5.8px;border-radius:50%;box-sizing:border-box;border:0.95px solid #111;background:#fff;"></div>
<span class="t" style="left:579.70px;top:176.05px;font-size:4.6px;letter-spacing:0.000px;color:#555;">X</span>
<div class="b" style="left:571.20px;top:183.50px;width:5.8px;height:5.8px;border-radius:50%;box-sizing:border-box;border:1.75px solid #1274dc;background:#fff;"></div>
<span class="t" style="left:579.70px;top:184.55px;font-size:4.6px;letter-spacing:0.000px;color:#555;">Y</span>
<div class="b" style="left:571.20px;top:192.40px;width:5.8px;height:5.8px;border-radius:50%;box-sizing:border-box;border:0.95px solid #111;background:#fff;"></div>
<span class="t" style="left:579.70px;top:193.45px;font-size:4.6px;letter-spacing:0.000px;color:#555;">Z</span>
<div class="b" style="left:627.50px;top:177.20px;width:14.4px;height:7.0px;border-radius:3.5px;background:#fff;border:0.9px solid #111;box-sizing:border-box;"></div>
<div class="b" style="left:629.00px;top:178.60px;width:4.2px;height:4.2px;border-radius:50%;background:#080808;"></div>
<span class="t" style="left:644.00px;top:178.95px;font-size:4.6px;letter-spacing:0.023px;color:#111;">Invert vertical</span>
<div class="b" style="left:627.50px;top:189.00px;width:14.4px;height:7.0px;border-radius:3.5px;background:#fff;border:0.9px solid #111;box-sizing:border-box;"></div>
<div class="b" style="left:629.00px;top:190.40px;width:4.2px;height:4.2px;border-radius:50%;background:#080808;"></div>
<span class="t" style="left:644.00px;top:190.65px;font-size:4.6px;letter-spacing:0.039px;color:#111;">Invert horizontal</span>
<span class="t" style="left:571.40px;top:207.05px;font-size:4.6px;letter-spacing:-0.153px;color:#3a3a3a;">Camera position</span>
<svg class="b" style="left:672.6px;top:206.2px" width="6" height="6" viewBox="0 0 6 6"><path d="M4.6,2.0 A2,2 0 1 0 4.9,3.6" fill="none" stroke="#333" stroke-width="0.6"/><polygon points="3.1,0.3 5.1,1.3 3.4,2.6" fill="#333"/></svg>
<div class="b" style="left:571.40px;top:215.70px;width:33.50px;height:6.40px;border:0.6px solid #7a7a7a;box-sizing:border-box;background:#fff;"></div>
<span class="t" style="left:572.80px;top:217.39px;font-size:3.7px;letter-spacing:0.133px;color:#4a4a4a;">11.3040066</span>
<svg class="b" style="left:599.70px;top:216.2px" width="4.4" height="5.4" viewBox="0 0 4.4 5.4"><polygon points="2.2,0.5 3.6,2.3 0.8,2.3" fill="#222"/><polygon points="2.2,4.9 3.6,3.1 0.8,3.1" fill="#222"/><line x1="0.2" y1="0.2" x2="0.2" y2="5.2" stroke="#bbb" stroke-width="0.3"/></svg>
<div class="b" style="left:609.40px;top:215.70px;width:33.30px;height:6.40px;border:0.6px solid #7a7a7a;box-sizing:border-box;background:#fff;"></div>
<span class="t" style="left:610.80px;top:217.39px;font-size:3.7px;letter-spacing:0.345px;color:#4a4a4a;">2.3554244</span>
<svg class="b" style="left:637.50px;top:216.2px" width="4.4" height="5.4" viewBox="0 0 4.4 5.4"><polygon points="2.2,0.5 3.6,2.3 0.8,2.3" fill="#222"/><polygon points="2.2,4.9 3.6,3.1 0.8,3.1" fill="#222"/><line x1="0.2" y1="0.2" x2="0.2" y2="5.2" stroke="#bbb" stroke-width="0.3"/></svg>
<div class="b" style="left:647.00px;top:215.70px;width:33.30px;height:6.40px;border:0.6px solid #7a7a7a;box-sizing:border-box;background:#fff;"></div>
<span class="t" style="left:648.40px;top:217.39px;font-size:3.7px;letter-spacing:0.105px;color:#4a4a4a;">10.0917416</span>
<svg class="b" style="left:675.10px;top:216.2px" width="4.4" height="5.4" viewBox="0 0 4.4 5.4"><polygon points="2.2,0.5 3.6,2.3 0.8,2.3" fill="#222"/><polygon points="2.2,4.9 3.6,3.1 0.8,3.1" fill="#222"/><line x1="0.2" y1="0.2" x2="0.2" y2="5.2" stroke="#bbb" stroke-width="0.3"/></svg>
<span class="t" style="left:571.40px;top:228.45px;font-size:4.6px;letter-spacing:-0.082px;color:#3a3a3a;">Field of view</span>
<span class="t" style="left:675.98px;top:228.65px;font-size:4.6px;letter-spacing:0.000px;color:#111;">45</span>
<div class="b" style="left:571.40px;top:238.70px;width:109.70px;height:0.80px;background:#c2c2c2;"></div>
<div class="b" style="left:598.20px;top:235.00px;width:2.30px;height:8.30px;background:#0a64d2;"></div>
<span class="t" style="left:571.40px;top:253.45px;font-size:4.6px;letter-spacing:-0.071px;color:#3a3a3a;">Movement speed</span>
<span class="t" style="left:675.98px;top:253.25px;font-size:4.6px;letter-spacing:0.000px;color:#111;">20</span>
<div class="b" style="left:571.40px;top:263.40px;width:109.70px;height:0.80px;background:#c2c2c2;"></div>
<div class="b" style="left:611.30px;top:259.60px;width:2.30px;height:8.30px;background:#0a64d2;"></div>
<span class="t" style="left:695.8px;top:43.3px;font-size:5.2px;font-weight:bold;color:#111;letter-spacing:-0.302px;transform-origin:0 0;transform:rotate(90deg);">Hide controls</span>
</div></div>
</body></html>
